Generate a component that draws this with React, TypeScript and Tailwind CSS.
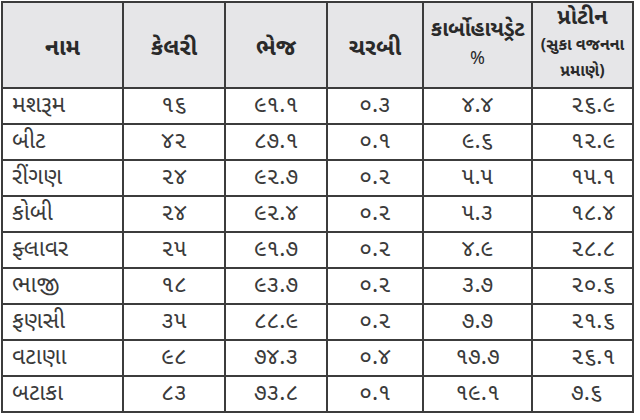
import { FC } from 'react';

interface Row {
  name: string;
  calories: string;
  moisture: string;
  fat: string;
  carbs: string;
  protein: string;
}

const rows: Row[] = [
  { name: 'મશરૂમ', calories: '૧૬', moisture: '૯૧.૧', fat: '૦.૩', carbs: '૪.૪', protein: '૨૬.૯' },
  { name: 'બીટ', calories: '૪૨', moisture: '૮૭.૧', fat: '૦.૧', carbs: '૯.૬', protein: '૧૨.૯' },
  { name: 'રીંગણ', calories: '૨૪', moisture: '૯૨.૭', fat: '૦.૨', carbs: '૫.૫', protein: '૧૫.૧' },
  { name: 'કોબી', calories: '૨૪', moisture: '૯૨.૪', fat: '૦.૨', carbs: '૫.૩', protein: '૧૮.૪' },
  { name: 'ફ્લાવર', calories: '૨૫', moisture: '૯૧.૭', fat: '૦.૨', carbs: '૪.૯', protein: '૨૮.૮' },
  { name: 'ભાજી', calories: '૧૮', moisture: '૯૩.૭', fat: '૦.૨', carbs: '૩.૭', protein: '૨૦.૬' },
  { name: 'ફણસી', calories: '૩૫', moisture: '૮૮.૯', fat: '૦.૨', carbs: '૭.૭', protein: '૨૧.૬' },
  { name: 'વટાણા', calories: '૯૮', moisture: '૭૪.૩', fat: '૦.૪', carbs: '૧૭.૭', protein: '૨૬.૧' },
  { name: 'બટાકા', calories: '૮૩', moisture: '૭૩.૮', fat: '૦.૧', carbs: '૧૯.૧', protein: '૭.૬' },
];

const th = 'border-2 border-[#3c3c3c] bg-[#e6e6e8] font-bold text-[#2a2a2a] text-center align-middle';
const td = 'border-2 border-[#3c3c3c] text-center align-middle';

const App: FC = () => {
  return (
    <div
      className="w-[640px] h-[420px] bg-white pt-[1px] pl-[1px]"
      style={{ fontFamily: '"Noto Sans Gujarati", "Lohit Gujarati", "Noto Sans", sans-serif' }}
    >
      <table className="w-[633px] border-collapse text-[23px] text-[#3a3a3a] leading-none">
        <colgroup>
          <col className="w-[121px]" />
          <col className="w-[102px]" />
          <col className="w-[102px]" />
          <col className="w-[96px]" />
          <col className="w-[109px]" />
          <col className="w-[101px]" />
        </colgroup>
        <thead>
          <tr className="h-[86px]">
            <th className={`${th} text-[23px] pt-2`}>નામ</th>
            <th className={`${th} text-[23px] pt-2`}>કેલરી</th>
            <th className={`${th} text-[23px] pt-2`}>ભેજ</th>
            <th className={`${th} text-[23px] pt-2`}>ચરબી</th>
            <th className={`${th} px-0`}>
              <div className="text-[21px] leading-[30px] tracking-[-0.3px] whitespace-nowrap">કાર્બોહાયડ્રેટ</div>
              <div className="text-[18px] leading-[28px] font-normal">%</div>
            </th>
            <th className={`${th} px-0`}>
              <div className="text-[22px] leading-[28px]">પ્રોટીન</div>
              <div className="text-[16px] leading-[27px] whitespace-nowrap">(સુકા વજનના</div>
              <div className="text-[16px] leading-[25px]">પ્રમાણે)</div>
            </th>
          </tr>
        </thead>
        <tbody>
          {rows.map((r) => (
            <tr key={r.name} className="h-[36px]">
              <td className={`${td} text-left pl-[9px]`}>{r.name}</td>
              <td className={td}>{r.calories}</td>
              <td className={td}>{r.moisture}</td>
              <td className={td}>{r.fat}</td>
              <td className={td}>{r.carbs}</td>
              <td className={`${td} text-left pl-[38px]`}>{r.protein}</td>
            </tr>
          ))}
        </tbody>
      </table>
    </div>
  );
};

export default App;
